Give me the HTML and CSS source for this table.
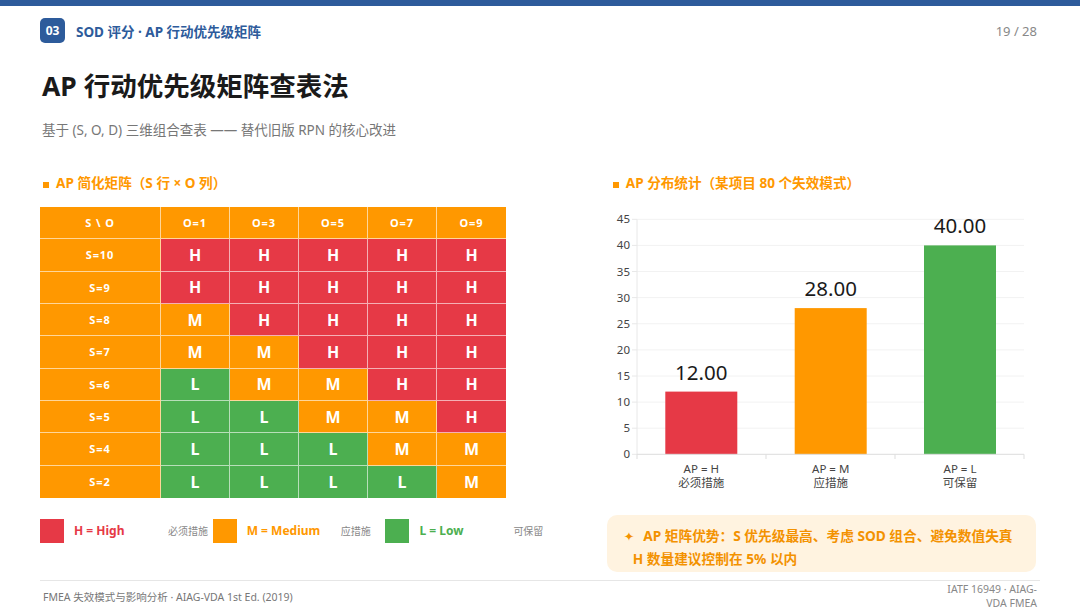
FILE: index.html
```html
<!DOCTYPE html>
<html lang="zh-CN">
<head>
<meta charset="utf-8">
<title>AP 行动优先级矩阵查表法</title>
<link rel="stylesheet" href="styles.css">
</head>
<body>
<div class="topbar"></div>
<div class="page">
  <header class="header">
    <div class="crumb">
      <span class="badge">03</span>
      <span class="crumb-text">SOD 评分 · AP 行动优先级矩阵</span>
    </div>
    <div class="pageno">19 / 28</div>
  </header>

  <h1 class="title">AP 行动优先级矩阵查表法</h1>
  <p class="subtitle">基于 (S, O, D) 三维组合查表 —— 替代旧版 RPN 的核心改进</p>

  <main class="main">
    <section class="col">
      <h2 class="sec-title"><span class="sq"></span>AP 简化矩阵（S 行 × O 列）</h2>
      <div class="matrix">
        <div class="c hd">S \ O</div><div class="c hd">O=1</div><div class="c hd">O=3</div><div class="c hd">O=5</div><div class="c hd">O=7</div><div class="c hd">O=9</div>
        <div class="c rh">S=10</div><div class="c h">H</div><div class="c h">H</div><div class="c h">H</div><div class="c h">H</div><div class="c h">H</div>
        <div class="c rh">S=9</div><div class="c h">H</div><div class="c h">H</div><div class="c h">H</div><div class="c h">H</div><div class="c h">H</div>
        <div class="c rh">S=8</div><div class="c m">M</div><div class="c h">H</div><div class="c h">H</div><div class="c h">H</div><div class="c h">H</div>
        <div class="c rh">S=7</div><div class="c m">M</div><div class="c m">M</div><div class="c h">H</div><div class="c h">H</div><div class="c h">H</div>
        <div class="c rh">S=6</div><div class="c l">L</div><div class="c m">M</div><div class="c m">M</div><div class="c h">H</div><div class="c h">H</div>
        <div class="c rh">S=5</div><div class="c l">L</div><div class="c l">L</div><div class="c m">M</div><div class="c m">M</div><div class="c h">H</div>
        <div class="c rh">S=4</div><div class="c l">L</div><div class="c l">L</div><div class="c l">L</div><div class="c m">M</div><div class="c m">M</div>
        <div class="c rh">S=2</div><div class="c l">L</div><div class="c l">L</div><div class="c l">L</div><div class="c l">L</div><div class="c m">M</div>
      </div>
      <div class="legend">
        <div class="lg-item"><span class="sw sw-h"></span><span class="lg-label t-h">H = High</span><span class="lg-desc">必须措施</span></div>
        <div class="lg-item"><span class="sw sw-m"></span><span class="lg-label t-m">M = Medium</span><span class="lg-desc">应措施</span></div>
        <div class="lg-item"><span class="sw sw-l"></span><span class="lg-label t-l">L = Low</span><span class="lg-desc">可保留</span></div>
      </div>
    </section>

    <section class="col">
      <h2 class="sec-title"><span class="sq"></span>AP 分布统计（某项目 80 个失效模式）</h2>
      <svg class="chart" width="428" height="290" viewBox="0 0 428 290">
        <g class="grid">
          <line x1="27" x2="414" y1="12.3" y2="12.3"/>
          <line x1="27" x2="414" y1="38.4" y2="38.4"/>
          <line x1="27" x2="414" y1="64.5" y2="64.5"/>
          <line x1="27" x2="414" y1="90.6" y2="90.6"/>
          <line x1="27" x2="414" y1="116.75" y2="116.75"/>
          <line x1="27" x2="414" y1="142.9" y2="142.9"/>
          <line x1="27" x2="414" y1="169" y2="169"/>
          <line x1="27" x2="414" y1="195.1" y2="195.1"/>
          <line x1="27" x2="414" y1="221.2" y2="221.2"/>
        </g>
        <g class="yaxis">
          <line x1="27" x2="27" y1="12.3" y2="247.3"/>
          <line x1="22" x2="27" y1="12.3" y2="12.3"/>
          <line x1="22" x2="27" y1="38.4" y2="38.4"/>
          <line x1="22" x2="27" y1="64.5" y2="64.5"/>
          <line x1="22" x2="27" y1="90.6" y2="90.6"/>
          <line x1="22" x2="27" y1="116.75" y2="116.75"/>
          <line x1="22" x2="27" y1="142.9" y2="142.9"/>
          <line x1="22" x2="27" y1="169" y2="169"/>
          <line x1="22" x2="27" y1="195.1" y2="195.1"/>
          <line x1="22" x2="27" y1="221.2" y2="221.2"/>
          <line x1="22" x2="27" y1="247.3" y2="247.3"/>
        </g>
        <g class="ticks">
          <text x="20" y="16.3">45</text>
          <text x="20" y="42.4">40</text>
          <text x="20" y="68.5">35</text>
          <text x="20" y="94.6">30</text>
          <text x="20" y="120.75">25</text>
          <text x="20" y="146.9">20</text>
          <text x="20" y="173">15</text>
          <text x="20" y="199.1">10</text>
          <text x="20" y="225.2">5</text>
          <text x="20" y="251.3">0</text>
        </g>
        <rect class="bar-h" x="55.3" y="184.6" width="72" height="62.7"/>
        <rect class="bar-m" x="184.7" y="101.1" width="72" height="146.2"/>
        <rect class="bar-l" x="314" y="38.4" width="72" height="208.9"/>
        <g class="xaxis">
          <line x1="27" x2="414" y1="247.3" y2="247.3"/>
          <line x1="27" x2="27" y1="247.3" y2="252"/>
          <line x1="156" x2="156" y1="247.3" y2="252"/>
          <line x1="285" x2="285" y1="247.3" y2="252"/>
          <line x1="414" x2="414" y1="247.3" y2="252"/>
        </g>
        <g class="vals">
          <text x="91.3" y="172.5">12.00</text>
          <text x="220.7" y="89">28.00</text>
          <text x="350" y="26.4">40.00</text>
        </g>
        <g class="xlabels">
          <text x="91.3" y="265.7">AP = H</text>
          <text x="91.3" y="279.5">必须措施</text>
          <text x="220.7" y="265.7">AP = M</text>
          <text x="220.7" y="279.5">应措施</text>
          <text x="350" y="265.7">AP = L</text>
          <text x="350" y="279.5">可保留</text>
        </g>
      </svg>
      <div class="callout">
        <div class="co-line"><span class="star">✦</span>AP 矩阵优势：S 优先级最高、考虑 SOD 组合、避免数值失真</div>
        <div class="co-line co-2">H 数量建议控制在 5% 以内</div>
      </div>
    </section>
  </main>

  <footer class="footer">
    <div class="ft-left">FMEA 失效模式与影响分析 · AIAG-VDA 1st Ed. (2019)</div>
    <div class="ft-right">IATF 16949 · AIAG-<br>VDA FMEA</div>
  </footer>
</div>
</body>
</html>
```

FILE: styles.css
```css
* { box-sizing: border-box; }
html, body {
  margin: 0;
  padding: 0;
  background: #ffffff;
}
body {
  width: 1080px;
  height: 608px;
  overflow: hidden;
  font-family: "Noto Sans", "Noto Sans CJK SC", sans-serif;
  color: #1a1a1a;
}
.topbar {
  height: 6px;
  background: #2d5b9b;
}
.page {
  padding: 0 40px;
}
.header {
  margin-top: 12px;
  height: 25px;
  display: flex;
  justify-content: space-between;
  align-items: center;
}
.crumb {
  display: flex;
  align-items: center;
  gap: 11px;
}
.badge {
  width: 25px;
  height: 25px;
  border-radius: 5px;
  background: #2d5b9b;
  color: #fff;
  font-size: 12px;
  font-weight: 700;
  display: flex;
  align-items: center;
  justify-content: center;
}
.crumb-text {
  color: #2d5b9b;
  font-size: 13.5px;
  font-weight: 700;
}
.pageno {
  color: #888;
  font-size: 13px;
  padding-right: 3px;
}
.title {
  margin: 25px 0 0 2px;
  font-size: 26.5px;
  line-height: 36px;
  font-weight: 700;
  color: #1a1a1a;
}
.subtitle {
  margin: 16px 0 0 2px;
  font-size: 13.5px;
  line-height: 20px;
  color: #777;
}
.main {
  margin-top: 33px;
  display: grid;
  grid-template-columns: 5fr 4fr;
  column-gap: 32px;
  align-items: start;
}
.col {
  display: flex;
  flex-direction: column;
}
.sec-title {
  margin: 0;
  font-size: 13.6px;
  line-height: 20px;
  font-weight: 700;
  color: #ff9800;
  display: flex;
  align-items: center;
  padding-left: 3px;
}
.sq {
  width: 6px;
  height: 6px;
  background: #ff9800;
  margin: 3px 7px 0 0;
}
.matrix {
  margin-top: 14px;
  width: 466px;
  display: grid;
  grid-template-columns: 121px repeat(5, 69px);
  grid-auto-rows: 32.33px;
}
.c {
  display: flex;
  align-items: center;
  justify-content: center;
  color: #fff;
  font-weight: 700;
  border-right: 1px solid rgba(255, 255, 255, 0.6);
  border-bottom: 1px solid rgba(255, 255, 255, 0.6);
}
.c:nth-child(6n) { border-right: none; }
.c:nth-last-child(-n+6) { border-bottom: none; }
.hd, .rh {
  background: #ff9800;
  font-size: 11px;
  letter-spacing: 0.9px;
}
.h, .m, .l { font-size: 16px; }
.h { background: #e63946; }
.m { background: #ff9800; }
.l { background: #4caf50; }
.legend {
  margin-top: 21px;
  display: flex;
}
.lg-item {
  width: 172.7px;
  display: flex;
  align-items: center;
}
.sw {
  width: 24px;
  height: 24px;
  margin-right: 10px;
}
.sw-h { background: #e63946; }
.sw-m { background: #ff9800; }
.sw-l { background: #4caf50; }
.lg-label {
  width: 94px;
  font-size: 12px;
  font-weight: 700;
}
.t-h { color: #e63946; }
.t-m { color: #ff9800; }
.t-l { color: #4caf50; }
.lg-desc {
  font-size: 10px;
  color: #888;
}
.chart {
  display: block;
  margin-top: 14px;
}
.chart text {
  font-family: "Noto Sans", "Noto Sans CJK SC", sans-serif;
}
.grid line { stroke: #f2f2f2; stroke-width: 1; }
.yaxis line { stroke: #e8e8e8; stroke-width: 1; }
.xaxis line { stroke: #dddddd; stroke-width: 1; }
.ticks text {
  font-size: 11.5px;
  fill: #444;
  text-anchor: end;
}
.bar-h { fill: #e63946; }
.bar-m { fill: #ff9800; }
.bar-l { fill: #4caf50; }
.vals text {
  font-size: 20.5px;
  fill: #1a1a1a;
  text-anchor: middle;
}
.xlabels text {
  font-size: 11.5px;
  fill: #444;
  text-anchor: middle;
}
.callout {
  margin: 18px 4px 0 -3px;
  background: #fff3e0;
  border-radius: 10px;
  padding: 10px 16px 3px 17px;
  color: #f39200;
  font-size: 13.7px;
  font-weight: 700;
  line-height: 21.5px;
}
.star {
  font-family: "DejaVu Sans", sans-serif;
  font-size: 12.5px;
  margin-right: 9px;
}
.co-2 { margin-left: 9px; }
.footer {
  margin-top: 8px;
  border-top: 1px solid #e6e6e6;
  display: flex;
  justify-content: space-between;
  align-items: center;
  padding: 1px 3px 0 3px;
  font-size: 10.5px;
  color: #777;
}
.ft-right {
  text-align: right;
  line-height: 14px;
  color: #888;
}
```
